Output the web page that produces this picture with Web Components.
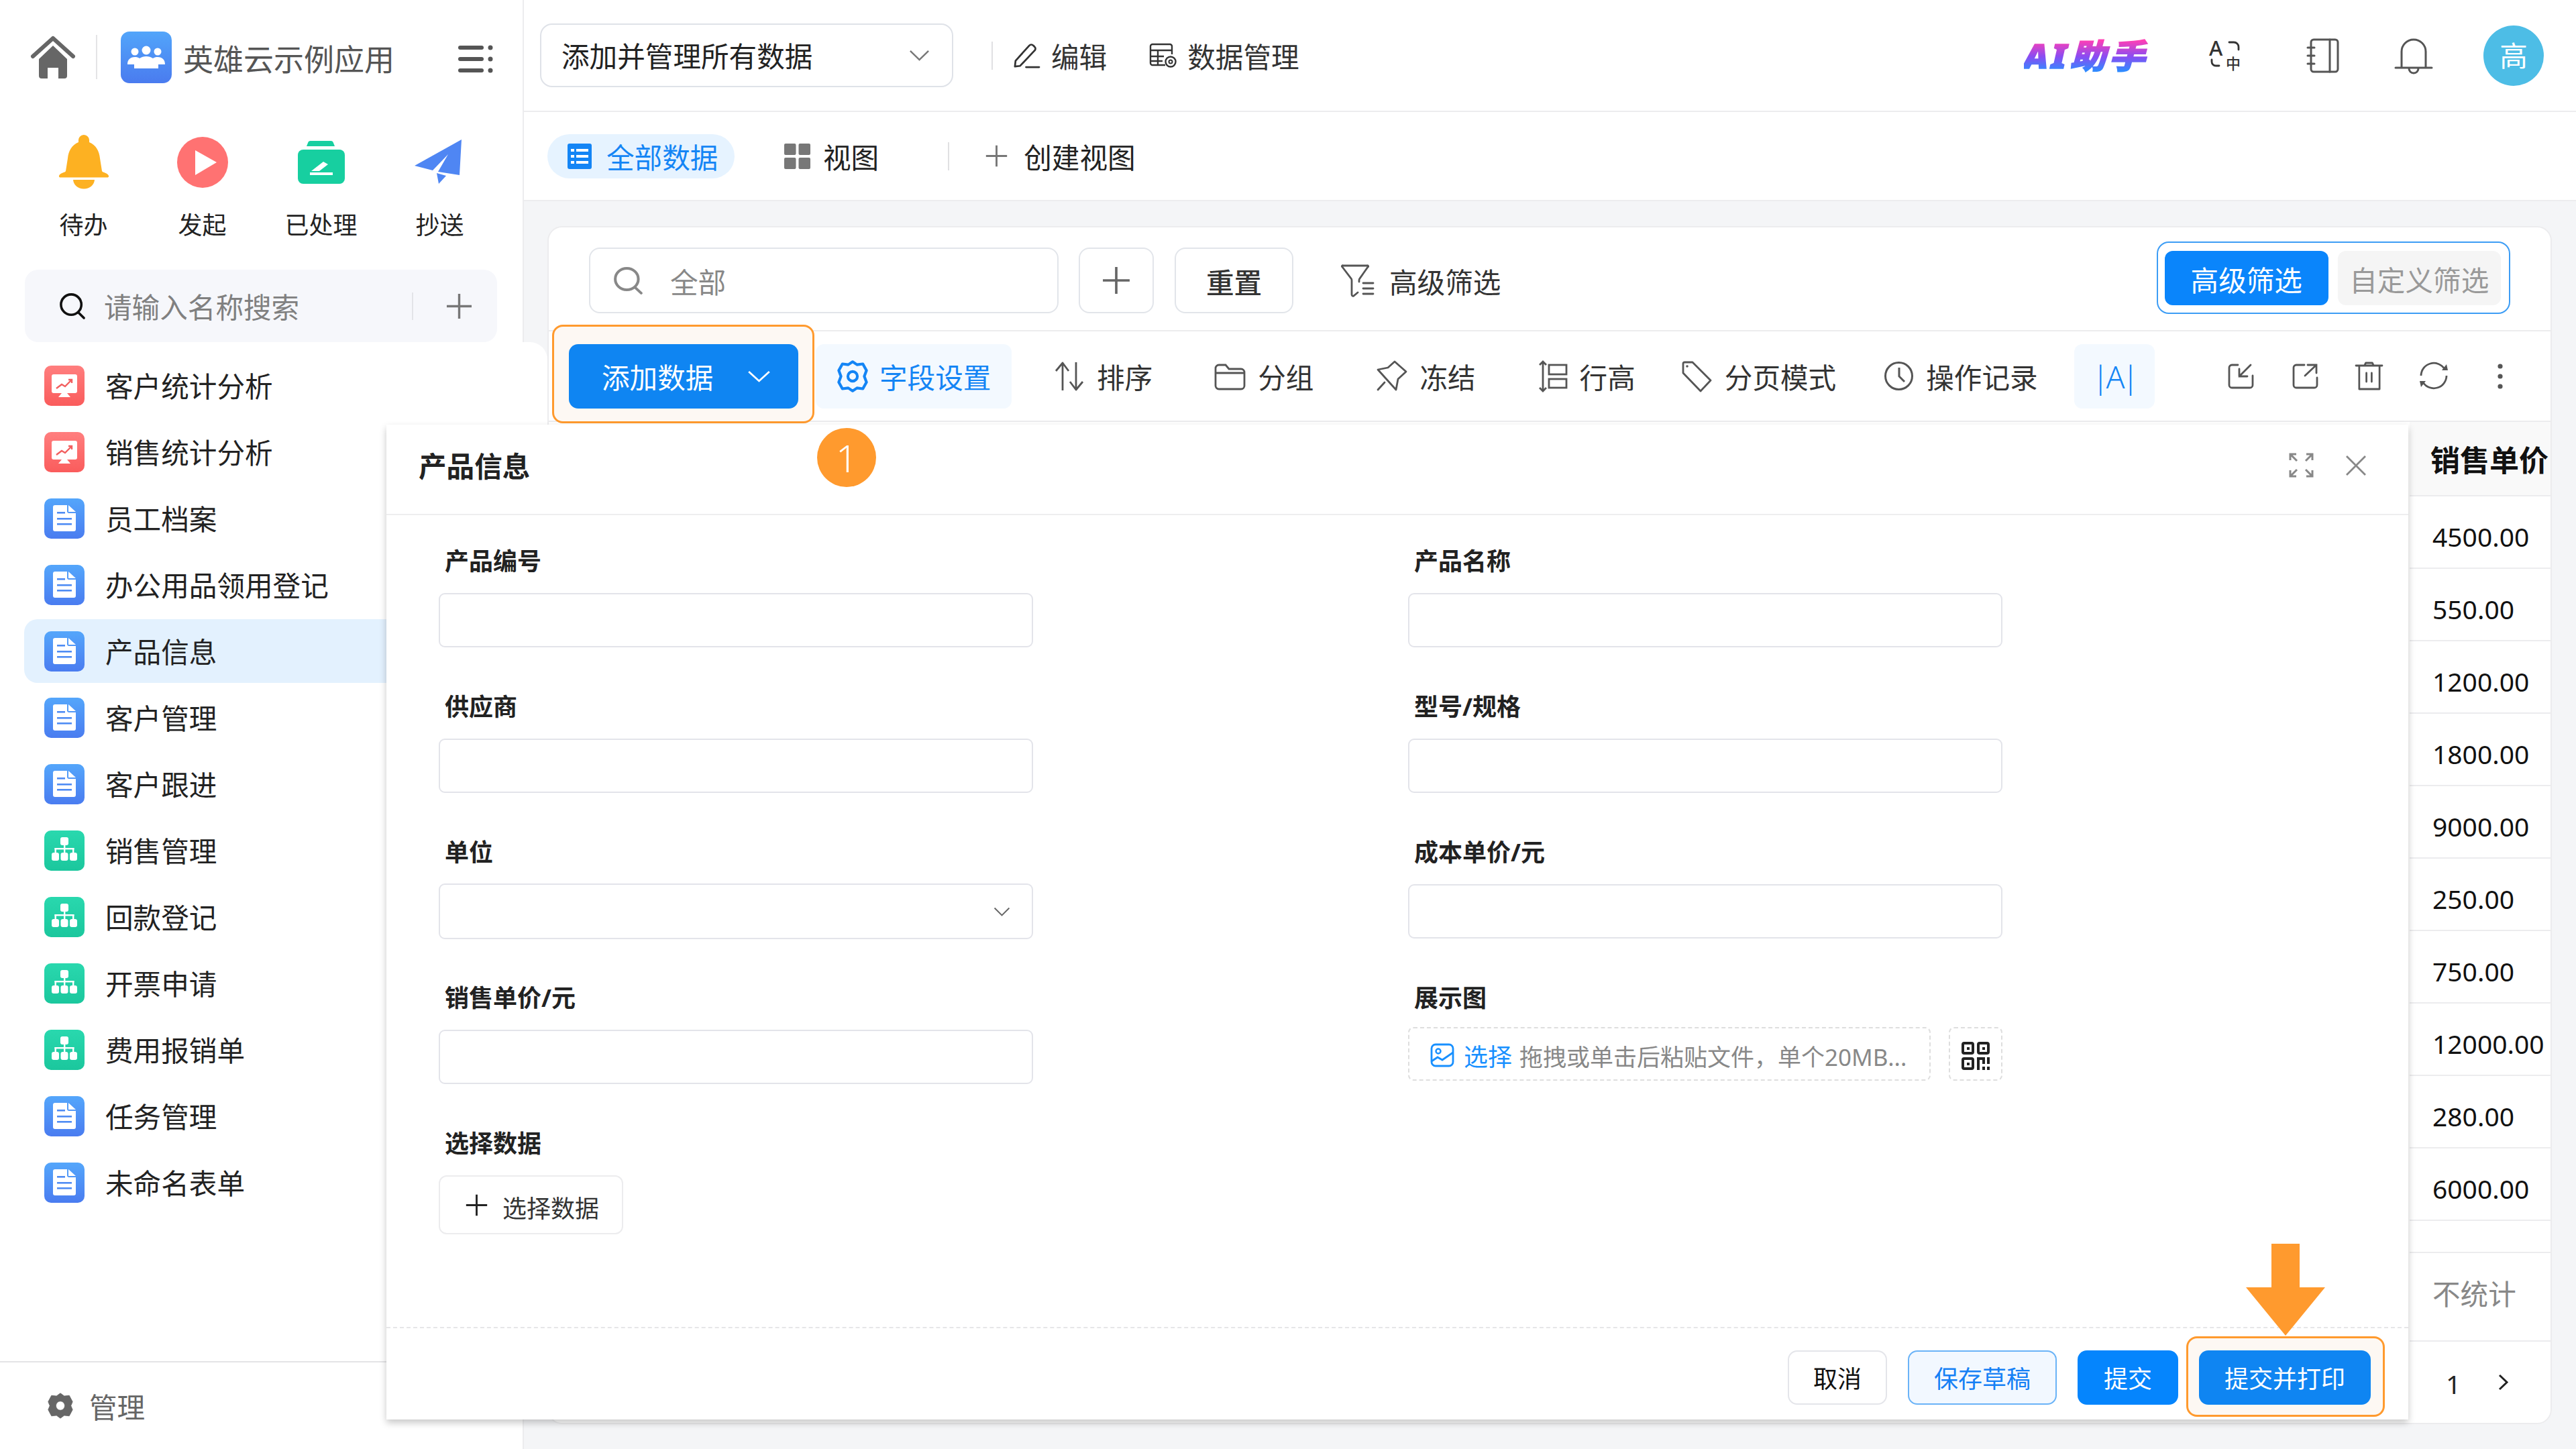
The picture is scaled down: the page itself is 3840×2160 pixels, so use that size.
<!DOCTYPE html>
<html lang="zh-CN">
<head>
<meta charset="utf-8">
<title>产品信息</title>
<style>
  html, body { margin: 0; padding: 0; background: #fff; }
  body { font-family: "Noto Sans", "Noto Sans CJK SC", sans-serif; font-size: 41.6px; color: #222; }
</style>
</head>
<body>
<app-shell>
  <app-sidebar slot="side">
    <side-item icon="chart">客户统计分析</side-item>
    <side-item icon="chart">销售统计分析</side-item>
    <side-item icon="doc">员工档案</side-item>
    <side-item icon="doc">办公用品领用登记</side-item>
    <side-item icon="doc" active>产品信息</side-item>
    <side-item icon="doc">客户管理</side-item>
    <side-item icon="doc">客户跟进</side-item>
    <side-item icon="org">销售管理</side-item>
    <side-item icon="org">回款登记</side-item>
    <side-item icon="org">开票申请</side-item>
    <side-item icon="org">费用报销单</side-item>
    <side-item icon="doc">任务管理</side-item>
    <side-item icon="doc">未命名表单</side-item>
  </app-sidebar>
  <app-topbar slot="main"></app-topbar>
  <app-viewbar slot="main"></app-viewbar>
  <data-card slot="main">
    <filter-row slot="filter"></filter-row>
    <tool-bar slot="tools"></tool-bar>
    <price-column slot="prices">
      <price-cell>4500.00</price-cell>
      <price-cell>550.00</price-cell>
      <price-cell>1200.00</price-cell>
      <price-cell>1800.00</price-cell>
      <price-cell>9000.00</price-cell>
      <price-cell>250.00</price-cell>
      <price-cell>750.00</price-cell>
      <price-cell>12000.00</price-cell>
      <price-cell>280.00</price-cell>
      <price-cell>6000.00</price-cell>
    </price-column>
  </data-card>
  <form-modal slot="over">
    <form-field label="产品编号"><text-input></text-input></form-field>
    <form-field label="产品名称"><text-input></text-input></form-field>
    <form-field label="供应商"><text-input></text-input></form-field>
    <form-field label="型号/规格"><text-input></text-input></form-field>
    <form-field label="单位"><text-input select></text-input></form-field>
    <form-field label="成本单价/元"><text-input></text-input></form-field>
    <form-field label="销售单价/元"><text-input></text-input></form-field>
    <form-field label="展示图"><upload-box></upload-box></form-field>
    <form-field label="选择数据"><pick-button></pick-button></form-field>
    <action-button slot="actions" kind="plain">取消</action-button>
    <action-button slot="actions" kind="light">保存草稿</action-button>
    <action-button slot="actions" kind="solid">提交</action-button>
    <action-button slot="actions" kind="print" callout>提交并打印</action-button>
  </form-modal>
</app-shell>

<script>
const ICONS = {
  home: ['0 0 66 66', `<path d="M3 32 33 5l30 27" fill="none" stroke="#666" stroke-width="6" stroke-linejoin="round" stroke-linecap="round"/><path d="M12 36 33 16l21 20v25a4 4 0 0 1-4 4H41V49H25v16h-9a4 4 0 0 1-4-4z" fill="#666"/>`],
  logo: ['0 0 76 77', `<defs><linearGradient id="g" x1="0" y1="0" x2="0" y2="1"><stop offset="0" stop-color="#52a5fa"/><stop offset="1" stop-color="#4a7bef"/></linearGradient></defs><rect width="76" height="77" rx="13" fill="url(#g)"/><g fill="#fff"><circle cx="21" cy="30" r="5.500"/><circle cx="38" cy="28" r="6.500"/><circle cx="55" cy="30" r="5.500"/><path d="M10 49c0-7 4-11 11-11 3 0 5 .6 7 2 3-2 6-3 10-3s7 1 10 3c2-1.400 4-2 7-2 7 0 11 4 11 11H56v6H20v-6z"/></g>`],
  menu: ['0 0 52 40', `<g fill="#555"><rect width="38" height="6" rx="3"/><rect y="17" width="38" height="6" rx="3"/><rect y="34" width="38" height="6" rx="3"/><circle cx="48" cy="3" r="3.500"/><circle cx="48" cy="20" r="3.500"/><circle cx="48" cy="37" r="3.500"/></g>`],
  bellFill: ['0 0 76 82', `<g fill="#fdb122"><path d="M38 0a8 8 0 0 1 8 9v2c10 4 15 13 16 24l3 19c.5 2 9 3 10 7 .4 1.500-.6 2.500-2 2.500H3c-1.400 0-2.400-1-2-2.500 1-4 9.500-5 10-7l3-19c1-11 6-20 16-24V9a8 8 0 0 1 8-9z"/><path d="M18 67h40c-1 9-9 15-20 15s-19-6-20-15z" transform="translate(7.600 6.700) scale(.8 .9)"/></g>`],
  play: ['0 0 76 76', `<circle cx="38" cy="38" r="38" fill="#ff7272"/><path d="M27 20 59 38 27 57z" fill="#fff"/>`],
  done: ['0 0 70 64', `<path d="M13 8l2-5a4 4 0 0 1 4-3h30a4 4 0 0 1 4 3l2 5z" fill="#17cfa0"/><rect y="13" width="70" height="51" rx="8" fill="#17cfa0"/><path d="M20 45 38 31l7 4-13 10z" fill="#fff"/><rect x="18" y="47" width="34" height="4" fill="#fff"/>`],
  plane: ['0 0 74 68', `<path d="M71 0 1 39l27 7 23-24-15 26 32 5zM34 50l14 4-11 12z" fill="#4f86f3"/>`],
  search: ['0 0 40 40', `<circle cx="18" cy="18" r="16" fill="none" stroke="currentColor" stroke-width="3.800"/><path d="M30 31l8 8" stroke="currentColor" stroke-width="3.800" stroke-linecap="round"/>`],
  plus: ['0 0 40 40', `<path d="M20 1v38M1 20h38" stroke="currentColor" stroke-width="3.500"/>`],
  chevron: ['0 0 32 18', `<path d="M2 2l14 14L30 2" fill="none" stroke="currentColor" stroke-width="2.500"/>`],
  edit: ['0 0 42 40', `<path d="M5 28 26 4a4 4 0 0 1 6 0l2 2a4 4 0 0 1 0 6L12 36l-8 1zM21 38h20" fill="none" stroke="currentColor" stroke-width="2.800" stroke-linecap="round" stroke-linejoin="round"/>`],
  dataset: ['0 0 42 38', `<path d="M24 33H5a3 3 0 0 1-3-3V5a3 3 0 0 1 3-3h26a3 3 0 0 1 3 3v12M2 11h32M2 20h20M2 27h18M13 11v22" fill="none" stroke="currentColor" stroke-width="2.400"/><circle cx="32" cy="28" r="7.500" fill="#fff" stroke="currentColor" stroke-width="2.400"/><circle cx="32" cy="28" r="2.500" fill="none" stroke="currentColor" stroke-width="2"/>`],
  translate: ['0 0 48 48', `<path d="M31 4h7a7 7 0 0 1 7 7v4M5 30v3a6 6 0 0 0 6 6h5" fill="none" stroke="currentColor" stroke-width="2.800" stroke-linecap="round"/><text x="1" y="24" font-size="31" font-weight="500" font-family="Noto Sans" fill="currentColor">A</text><text x="26" y="44" font-size="22" font-weight="500" font-family="Noto Sans CJK SC" fill="currentColor">中</text>`],
  notebook: ['0 0 49 52', `<rect x="7" y="2" width="40" height="48" rx="4" fill="none" stroke="currentColor" stroke-width="3"/><path d="M35 2v48M2 14h10M2 26h10M2 38h10" stroke="currentColor" stroke-width="3" fill="none" stroke-linecap="round"/>`],
  bell: ['0 0 56 54', `<path d="M10 45V21a18 18 0 0 1 36 0v24M1 45h54M21 46c0 4 3 7 7 7s7-3 7-7" fill="none" stroke="currentColor" stroke-width="3" stroke-linecap="round"/>`],
  list: ['0 0 36 38', `<rect width="36" height="38" rx="3" fill="#1485f5"/><g fill="#fff"><rect x="5" y="8" width="5" height="4"/><rect x="13" y="8" width="18" height="4"/><rect x="5" y="17" width="5" height="4"/><rect x="13" y="17" width="18" height="4"/><rect x="5" y="26" width="5" height="4"/><rect x="13" y="26" width="18" height="4"/></g>`],
  grid: ['0 0 39 38', `<g fill="#777"><rect width="17.500" height="17" rx="2"/><rect x="21.500" width="17.500" height="17" rx="2"/><rect y="21" width="17.500" height="17" rx="2"/><rect x="21.500" y="21" width="17.500" height="17" rx="2"/></g>`],
  funnel: ['0 0 51 51', `<path d="M3 3h36a1 1 0 0 1 1 2L28 22c-1 1-1 2-1 3v2M3 3a1 1 0 0 0-1 2l13 17c1 1 1 2 1 3v21c0 2 2 3 3 2l6-5M33 29h15M33 37h15M33 45h15" fill="none" stroke="currentColor" stroke-width="2.800" stroke-linecap="round"/>`],
  gear: ['0 0 46 46', `<path d="M23 3l6 4 8-1 5 9-3 8 3 8-5 9-8-1-6 4-6-4-8 1-5-9 3-8-3-8 5-9 8 1z" fill="none" stroke="currentColor" stroke-width="3.800" stroke-linejoin="round"/><circle cx="23" cy="23" r="6.500" fill="none" stroke="currentColor" stroke-width="3.800"/>`],
  gearFill: ['0 0 46 46', `<path fill-rule="evenodd" d="M23 1l7 5 9-1 6 11-3 7 3 7-6 11-9-1-7 5-7-5-9 1L1 30l3-7-3-7L7 5l9 1zM23 15a8 8 0 1 0 0 16 8 8 0 0 0 0-16z" fill="#666" stroke="#666" stroke-width="1" stroke-linejoin="round"/>`],
  sort: ['0 0 46 46', `<path d="M13 44V3L3 15M13 3l9 12M33 2v41l10-12M33 43l-9-12" fill="none" stroke="currentColor" stroke-width="2.800" stroke-linejoin="round"/>`],
  folder: ['0 0 47 42', `<path d="M2 9a5 5 0 0 1 5-5h10l5 6h18a5 5 0 0 1 5 5v20a5 5 0 0 1-5 5H7a5 5 0 0 1-5-5zM2 16h43" fill="none" stroke="currentColor" stroke-width="2.800"/>`],
  pin: ['0 0 46 47', `<path d="M27 2 44 17 32 28 29 44 2 14 17 11zM12 33 2 44" fill="none" stroke="currentColor" stroke-width="2.800" stroke-linejoin="round" stroke-linecap="round"/>`],
  rowheight: ['0 0 44 48', `<path d="M7 2v44M2 7l5-5 5 5M2 41l5 5 5-5" fill="none" stroke="currentColor" stroke-width="2.800"/><rect x="16" y="7" width="26" height="14" fill="none" stroke="currentColor" stroke-width="2.800"/><rect x="16" y="28" width="26" height="13" fill="none" stroke="currentColor" stroke-width="2.800"/>`],
  tag: ['0 0 47 48', `<path d="M5 3h12l27 27-15 16L3 19V5a2 2 0 0 1 2-2z" fill="none" stroke="currentColor" stroke-width="2.800" stroke-linejoin="round"/><circle cx="9" cy="9" r="1.800" fill="currentColor"/>`],
  clock: ['0 0 45 45', `<circle cx="22.500" cy="22.500" r="20" fill="none" stroke="currentColor" stroke-width="3"/><path d="M23 10v13l8 8" fill="none" stroke="currentColor" stroke-width="3"/>`],
  import: ['0 0 39 38', `<path d="M15 2H6a4 4 0 0 0-4 4v26a4 4 0 0 0 4 4h27a4 4 0 0 0 4-4V18M34 2 17 19M17 8v11h12" fill="none" stroke="currentColor" stroke-width="2.800" stroke-linecap="round"/>`],
  export: ['0 0 39 38', `<path d="M18 2H6a4 4 0 0 0-4 4v26a4 4 0 0 0 4 4h27a4 4 0 0 0 4-4V21M36 2 19 18M23 2h13v12" fill="none" stroke="currentColor" stroke-width="2.800" stroke-linecap="round"/>`],
  trash: ['0 0 42 43', `<path d="M1 6h40M14 6l2-4h10l2 4M6 6v35h31V6M17 17v13M25 17v13" fill="none" stroke="currentColor" stroke-width="2.800" stroke-linecap="round" stroke-linejoin="round"/>`],
  refresh: ['0 0 45 45', `<path d="M3 22A19 19 0 0 1 38 12M41 22A19 19 0 0 1 6 32" fill="none" stroke="currentColor" stroke-width="2.800"/><path d="M34 14h9l-2-9zM10 30H1l2 9z" fill="currentColor"/>`],
  dots: ['0 0 8 38', `<g fill="currentColor"><circle cx="4" cy="4" r="3.600"/><circle cx="4" cy="19" r="3.600"/><circle cx="4" cy="34" r="3.600"/></g>`],
  expand: ['0 0 37 37', `<path d="M2 11V2h9M2 2l10 10M26 2h9v9M35 2 25 12M2 26v9h9M2 35l10-10M35 26v9h-9M35 35 25 25" fill="none" stroke="currentColor" stroke-width="3"/>`],
  close: ['0 0 32 32', `<path d="M2 2l28 28M30 2 2 30" stroke="currentColor" stroke-width="2.800"/>`],
  picture: ['0 0 36 36', `<rect x="2" y="2" width="32" height="32" rx="6" fill="none" stroke="#1890ff" stroke-width="2.800"/><circle cx="12" cy="12" r="3.500" fill="none" stroke="#1890ff" stroke-width="2.500"/><path d="M2 27l9-6 7 4 16-11" fill="none" stroke="#1890ff" stroke-width="2.800"/>`],
  qr: ['0 0 42 42', `<g fill="none" stroke="#222" stroke-width="4"><rect x="2" y="2" width="15" height="15" rx="2"/><rect x="25" y="2" width="15" height="15" rx="2"/><rect x="2" y="25" width="15" height="15" rx="2"/></g><g fill="#222"><rect x="8" y="8" width="4" height="4"/><rect x="31" y="8" width="4" height="4"/><rect x="8" y="31" width="4" height="4"/><rect x="23" y="23" width="4" height="19"/><rect x="23" y="23" width="12" height="4"/><rect x="31" y="23" width="4" height="10"/><rect x="38" y="23" width="4" height="10"/><rect x="31" y="37" width="4" height="5"/><rect x="38" y="37" width="4" height="5"/></g>`],
  next: ['0 0 17 25', `<path d="M3 2l11 10.500L3 23" fill="none" stroke="#222" stroke-width="3"/>`],
  chart: ['0 0 60 60', `<defs><linearGradient id="g" x1="0" y1="0" x2="0" y2="1"><stop offset="0" stop-color="#ff7e7e"/><stop offset="1" stop-color="#fa5c5c"/></linearGradient></defs><rect width="60" height="60" rx="10" fill="url(#g)"/><path d="M14 13h32a3 3 0 0 1 3 3v22a3 3 0 0 1-3 3H34l5 6H21l5-6H14a3 3 0 0 1-3-3V16a3 3 0 0 1 3-3z" fill="#fff"/><path d="M18 34l8-6 5 3 9-9M36 21h5v5" fill="none" stroke="#f25f5f" stroke-width="2.400"/>`],
  doc: ['0 0 60 60', `<defs><linearGradient id="g" x1="0" y1="0" x2="0" y2="1"><stop offset="0" stop-color="#54a6fb"/><stop offset="1" stop-color="#4a7cf0"/></linearGradient></defs><rect width="60" height="60" rx="10" fill="url(#g)"/><path d="M16 10h18v9a3 3 0 0 0 3 3h10v24a3 3 0 0 1-3 3H16a3 3 0 0 1-3-3V13a3 3 0 0 1 3-3zM36 10l11 10H36z" fill="#fff"/><g fill="#4f8cf4"><rect x="19" y="20" width="12" height="2.600"/><rect x="19" y="29" width="22" height="2.600"/><rect x="19" y="37" width="22" height="2.600"/></g>`],
  org: ['0 0 60 60', `<defs><linearGradient id="g" x1="0" y1="0" x2="0" y2="1"><stop offset="0" stop-color="#29d8ae"/><stop offset="1" stop-color="#1bc79d"/></linearGradient></defs><rect width="60" height="60" rx="10" fill="url(#g)"/><g fill="#fff"><rect x="24" y="10" width="12" height="12" rx="3"/><rect x="11" y="33" width="11" height="12" rx="3"/><rect x="24.500" y="33" width="11" height="12" rx="3"/><rect x="38" y="33" width="11" height="12" rx="3"/><rect x="29" y="22" width="2.400" height="11"/><rect x="15.500" y="26" width="29" height="2.400"/><rect x="15.500" y="26" width="2.400" height="7"/><rect x="42" y="26" width="2.400" height="7"/></g>`]
}

class UiIcon extends HTMLElement {
  connectedCallback() {
    const [box, body] = ICONS[this.getAttribute('name')]
    const w = this.getAttribute('w') || 40
    const h = this.getAttribute('h') || w
    const color = this.getAttribute('color') || 'inherit'
    if (!this.shadowRoot) this.attachShadow({ mode: 'open' })
    this.shadowRoot.innerHTML = `
      <style>
        :host { display: inline-flex; flex: none; width: ${w}px; height: ${h}px; color: ${color}; }
        svg { display: block; width: 100%; height: 100%; overflow: visible; }
      </style>
      <svg viewBox="${box}" preserveAspectRatio="none">${body}</svg>
    `
  }
}
customElements.define('ui-icon', UiIcon)

class AppShell extends HTMLElement {
  constructor() {
    super()
    this.attachShadow({ mode: 'open' })
    this.shadowRoot.innerHTML = `
      <style>
        :host { display: grid; grid-template-columns: 781px 1fr; position: relative; width: 3840px; height: 2160px; overflow: hidden; background: #fff; }
        .main { display: flex; flex-direction: column; min-width: 0; height: 2160px; }
        .patch { position: absolute; left: 779px; top: 510px; width: 37px; height: 125px; background: #fff; border-top-right-radius: 26px; z-index: 2; }
        .badge { position: absolute; left: 1218px; top: 638px; width: 88px; height: 88px; border-radius: 50%; background: #ff9a2e; color: #fff; font: 300 56px/88px "Noto Sans", sans-serif; text-align: center; z-index: 6; }
        .arrow { position: absolute; left: 3348px; top: 1854px; width: 118px; height: 137px; z-index: 6; display: block; }
      </style>
      <slot name="side"></slot>
      <div class="main"><slot name="main"></slot></div>
      <div class="patch"></div>
      <slot name="over"></slot>
      <div class="badge">1</div>
      <svg class="arrow" viewBox="0 0 118 137"><path d="M38 0h42v65h38L59 137 0 65h38z" fill="#ff9a2e"/></svg>
    `
  }
}
customElements.define('app-shell', AppShell)

class AppSidebar extends HTMLElement {
  constructor() {
    super()
    this.attachShadow({ mode: 'open' })
    this.shadowRoot.innerHTML = `
      <style>
        :host { display: flex; flex-direction: column; height: 2160px; border-right: 2px solid #ececee; box-sizing: border-box; background: #fff; }
        .head { display: flex; align-items: center; height: 170px; padding-left: 46px; flex: none; }
        .rule { width: 2px; height: 66px; background: #e4e4e6; margin: 0 35px 0 31px; }
        .title { font-size: 45px; line-height: 60px; color: #555; margin: 8px 0 0 17px; white-space: nowrap; }
        .menu { margin: 6px 44px 0 auto; }
        .quick { display: grid; grid-template-columns: repeat(4, 177px); padding: 30px 0 0 36px; flex: none; }
        .search { display: flex; align-items: center; box-sizing: border-box; width: 704px; height: 108px; margin: 44px 0 0 37px; padding: 0 37px 0 52px; background: #f6f7fb; border-radius: 20px; flex: none; color: #111; }
        .search span { margin-left: 28px; color: #808080; line-height: 60px; padding-top: 3px; }
        .search i { width: 2px; height: 41px; background: #e3e4e8; margin-left: auto; margin-right: 49px; }
        .list { flex: 1; padding-top: 17px; }
        .foot { display: flex; align-items: center; height: 131px; box-sizing: border-box; flex: none; padding: 0 0 0 71px; border-top: 2px solid #e4e4e6; color: #666; }
        .foot span { margin-left: 24px; line-height: 60px; padding-top: 4px; }
      </style>
      <div class="head">
        <ui-icon name="home" w="66" h="66"></ui-icon>
        <div class="rule"></div>
        <ui-icon name="logo" w="76" h="77"></ui-icon>
        <div class="title">英雄云示例应用</div>
        <ui-icon class="menu" name="menu" w="52" h="40"></ui-icon>
      </div>
      <div class="quick">
        <quick-action icon="bellFill" w="76" h="82">待办</quick-action>
        <quick-action icon="play" w="76" h="76">发起</quick-action>
        <quick-action icon="done" w="70" h="64">已处理</quick-action>
        <quick-action icon="plane" w="74" h="68" shift="-4">抄送</quick-action>
      </div>
      <div class="search">
        <ui-icon name="search" w="38" h="38"></ui-icon>
        <span>请输入名称搜索</span>
        <i></i>
        <ui-icon name="plus" w="39" h="39" color="#777"></ui-icon>
      </div>
      <div class="list"><slot></slot></div>
      <div class="foot"><ui-icon name="gearFill" w="38" h="39"></ui-icon><span>管理</span></div>
    `
  }
}
customElements.define('app-sidebar', AppSidebar)

class QuickAction extends HTMLElement {
  constructor() {
    super()
    this.attachShadow({ mode: 'open' })
    this.shadowRoot.innerHTML = `
      <style>
        :host { display: flex; flex-direction: column; align-items: center; font-size: 36px; color: #222; }
        .pic { display: flex; align-items: center; justify-content: center; height: 84px; margin-left: ${this.getAttribute('shift') || 0}px; }
        .txt { line-height: 44px; margin-top: 30px; }
      </style>
      <div class="pic"><ui-icon name="${this.getAttribute('icon')}" w="${this.getAttribute('w')}" h="${this.getAttribute('h')}"></ui-icon></div>
      <div class="txt"><slot></slot></div>
    `
  }
}
customElements.define('quick-action', QuickAction)

class SideItem extends HTMLElement {
  constructor() {
    super()
    this.attachShadow({ mode: 'open' })
    this.shadowRoot.innerHTML = `
      <style>
        :host { display: flex; align-items: center; height: 95px; margin: 0 0 4px 36px; padding-left: 30px; color: #222; border-radius: 20px 0 0 20px; }
        :host([active]) { background: #e3f1fe; }
        span { margin-left: 31px; line-height: 60px; padding-top: 3px; white-space: nowrap; }
      </style>
      <ui-icon name="${this.getAttribute('icon')}" w="60" h="60"></ui-icon>
      <span><slot></slot></span>
    `
  }
}
customElements.define('side-item', SideItem)

class AppTopbar extends HTMLElement {
  constructor() {
    super()
    this.attachShadow({ mode: 'open' })
    this.shadowRoot.innerHTML = `
      <style>
        :host { display: flex; align-items: center; box-sizing: border-box; height: 167px; flex: none; padding: 0 48px 0 24px; border-bottom: 2px solid #ececee; color: #333; }
        .pick { display: flex; align-items: center; box-sizing: border-box; width: 616px; height: 95px; padding: 0 33px 0 30px; border: 2px solid #dfe2e8; border-radius: 18px; color: #222; }
        .pick span { flex: 1; line-height: 60px; padding-top: 3px; white-space: nowrap; }
        .rule { width: 2px; height: 42px; background: #e0e0e2; margin: 0 29px 0 57px; }
        .txt { line-height: 60px; padding-top: 5px; white-space: nowrap; }
        .ai { flex: none; width: 182px; margin-left: auto; font: italic 900 50px/60px "Noto Sans", "Noto Sans CJK SC", sans-serif; letter-spacing: 4px; transform: scaleX(1.080); transform-origin: left center; background: linear-gradient(to bottom, #ff3fb5 12%, #8a4cf2 52%, #2f8bff 88%); -webkit-background-clip: text; background-clip: text; color: transparent; -webkit-text-stroke: 1.500px transparent; white-space: nowrap; }
        .avatar { width: 90px; height: 90px; border-radius: 50%; background: #4dbde6; color: #fff; text-align: center; line-height: 90px; margin-left: 76px; }
      </style>
      <div class="pick"><span>添加并管理所有数据</span><ui-icon name="chevron" w="31" h="17" color="#777"></ui-icon></div>
      <div class="rule"></div>
      <ui-icon name="edit" w="41" h="38"></ui-icon>
      <div class="txt" style="margin-left:17px">编辑</div>
      <ui-icon name="dataset" w="42" h="38" style="margin-left:63px"></ui-icon>
      <div class="txt" style="margin-left:15px">数据管理</div>
      <div class="ai">AI助手</div>
      <ui-icon name="translate" w="48" h="48" style="margin-left:93px" color="#333"></ui-icon>
      <ui-icon name="notebook" w="49" h="52" style="margin-left:98px" color="#555"></ui-icon>
      <ui-icon name="bell" w="56" h="54" style="margin-left:83px" color="#555"></ui-icon>
      <div class="avatar">高</div>
    `
  }
}
customElements.define('app-topbar', AppTopbar)

class AppViewbar extends HTMLElement {
  constructor() {
    super()
    this.attachShadow({ mode: 'open' })
    this.shadowRoot.innerHTML = `
      <style>
        :host { display: flex; align-items: center; box-sizing: border-box; height: 133px; flex: none; padding-left: 35px; border-bottom: 2px solid #ececee; color: #222; }
        .pill { display: flex; align-items: center; box-sizing: border-box; width: 279px; height: 66px; padding-left: 30px; border-radius: 33px; background: #e6f3ff; color: #1485f5; }
        .txt { line-height: 60px; padding-top: 4px; white-space: nowrap; }
        .rule { width: 2px; height: 42px; background: #e0e0e2; margin: 0 54px 0 103px; }
      </style>
      <div class="pill"><ui-icon name="list" w="36" h="38"></ui-icon><span class="txt" style="margin-left:22px">全部数据</span></div>
      <ui-icon name="grid" w="39" h="38" style="margin-left:74px"></ui-icon>
      <span class="txt" style="margin-left:19px">视图</span>
      <div class="rule"></div>
      <ui-icon name="plus" w="33" h="33" color="#777"></ui-icon>
      <span class="txt" style="margin-left:24px">创建视图</span>
    `
  }
}
customElements.define('app-viewbar', AppViewbar)

class DataCard extends HTMLElement {
  constructor() {
    super()
    this.attachShadow({ mode: 'open' })
    this.shadowRoot.innerHTML = `
      <style>
        :host { display: block; flex: 1; background: #f4f5f7; padding: 37px 36px 37px 35px; min-height: 0; box-sizing: border-box; }
        .card { display: flex; flex-direction: column; box-sizing: border-box; height: 100%; background: #fff; border: 2px solid #ececee; border-radius: 22px; overflow: hidden; }
        .table { flex: 1; display: flex; min-height: 0; }
        .rest { flex: 1; border-top: 2px solid #ececee; }
      </style>
      <div class="card">
        <slot name="filter"></slot>
        <slot name="tools"></slot>
        <div class="table"><div class="rest"></div><slot name="prices"></slot></div>
      </div>
    `
  }
}
customElements.define('data-card', DataCard)

class FilterRow extends HTMLElement {
  constructor() {
    super()
    this.attachShadow({ mode: 'open' })
    this.shadowRoot.innerHTML = `
      <style>
        :host { display: flex; align-items: flex-start; box-sizing: border-box; height: 155px; flex: none; padding: 30px 0 0 60px; border-bottom: 2px solid #ececee; color: #333; }
        .box { display: flex; align-items: center; justify-content: center; box-sizing: border-box; height: 98px; border: 2px solid #e2e5ea; border-radius: 16px; line-height: 60px; }
        .find { width: 700px; justify-content: flex-start; padding-left: 35px; color: #888; }
        .find span { margin-left: 41px; padding-top: 6px; }
        .adv { display: flex; align-items: center; height: 98px; margin-left: 71px; line-height: 60px; }
        .adv span { margin-left: 21px; padding-top: 6px; }
        .switch { display: flex; gap: 14px; box-sizing: border-box; width: 527px; height: 108px; margin: -9px 60px 0 auto; padding: 12px 12px 0 10px; border: 2.500px solid #3d9df5; border-radius: 18px; }
        .switch div { width: 244px; height: 81px; border-radius: 12px; text-align: center; line-height: 88px; font-size: 41.6px; }
        .on { background: #0a85fb; color: #fff; }
        .off { background: #f5f5f5; color: #999; }
      </style>
      <div class="box find"><ui-icon name="search" w="43" h="40" color="#888"></ui-icon><span>全部</span></div>
      <div class="box" style="width:112px;margin-left:30px"><ui-icon name="plus" w="42" h="42" color="#666"></ui-icon></div>
      <div class="box" style="width:177px;margin-left:31px;font-weight:500;color:#333;padding-top:6px">重置</div>
      <div class="adv"><ui-icon name="funnel" w="51" h="51" color="#555"></ui-icon><span>高级筛选</span></div>
      <div class="switch"><div class="on">高级筛选</div><div class="off">自定义筛选</div></div>
    `
  }
}
customElements.define('filter-row', FilterRow)

class ToolItem extends HTMLElement {
  constructor() {
    super()
    this.attachShadow({ mode: 'open' })
    this.shadowRoot.innerHTML = `
      <style>
        :host { display: inline-flex; align-items: center; flex: none; }
        span { margin-left: 18px; line-height: 60px; padding-top: 4px; white-space: nowrap; color: #333; }
      </style>
      <ui-icon name="${this.getAttribute('icon')}" w="${this.getAttribute('w') || 46}" h="${this.getAttribute('h') || 46}" color="#555"></ui-icon>
      <span><slot></slot></span>
    `
  }
}
customElements.define('tool-item', ToolItem)

class ToolBar extends HTMLElement {
  constructor() {
    super()
    this.attachShadow({ mode: 'open' })
    this.shadowRoot.innerHTML = `
      <style>
        :host { display: flex; align-items: center; box-sizing: border-box; height: 133px; flex: none; padding-left: 30px; }
        .add { position: relative; isolation: isolate; display: flex; align-items: center; box-sizing: border-box; width: 342px; height: 96px; padding-left: 49px; background: #0f85f2; border-radius: 14px; color: #fff; }
        .add::before { content: ""; position: absolute; left: -25px; top: -29px; right: -24px; bottom: -22px; background: #fdf8f3; border: 3px solid #ff9a2e; border-radius: 16px; z-index: -2; }
        .add::after { content: ""; position: absolute; inset: 0; background: #0f85f2; border-radius: 14px; z-index: -1; }
        .add span { line-height: 60px; padding-top: 4px; }
        .field { display: flex; align-items: center; box-sizing: border-box; width: 292px; height: 96px; margin-left: 26px; padding-left: 30px; background: #f3f9ff; border-radius: 12px; color: #1485f5; }
        .field span { margin-left: 15px; line-height: 60px; padding-top: 4px; white-space: nowrap; }
        .wrap { display: flex; align-items: center; justify-content: center; width: 120px; height: 96px; margin-left: 54px; background: #f3f9ff; border-radius: 12px; color: #1485f5; font: 300 46px/60px "Noto Sans", sans-serif; letter-spacing: -4px; }
      </style>
      <div class="add"><span>添加数据</span><ui-icon name="chevron" w="35" h="18" style="margin-left:51px"></ui-icon></div>
      <div class="field"><ui-icon name="gear" w="50" h="50"></ui-icon><span>字段设置</span></div>
      <tool-item icon="sort" style="margin-left:63px">排序</tool-item>
      <tool-item icon="folder" w="47" h="42" style="margin-left:92px">分组</tool-item>
      <tool-item icon="pin" h="47" style="margin-left:94px">冻结</tool-item>
      <tool-item icon="rowheight" w="44" h="48" style="margin-left:93px">行高</tool-item>
      <tool-item icon="tag" w="47" h="48" style="margin-left:68px">分页模式</tool-item>
      <tool-item icon="clock" w="45" h="45" style="margin-left:71px">操作记录</tool-item>
      <div class="wrap">|A|</div>
      <ui-icon name="import" w="39" h="38" color="#555" style="margin-left:109px"></ui-icon>
      <ui-icon name="export" w="39" h="38" color="#555" style="margin-left:57px"></ui-icon>
      <ui-icon name="trash" w="41" h="43" color="#555" style="margin-left:55px"></ui-icon>
      <ui-icon name="refresh" w="45" h="45" color="#555" style="margin-left:54px"></ui-icon>
      <ui-icon name="dots" w="8" h="38" color="#555" style="margin-left:72px"></ui-icon>
    `
  }
}
customElements.define('tool-bar', ToolBar)

class PriceColumn extends HTMLElement {
  constructor() {
    super()
    this.attachShadow({ mode: 'open' })
    this.shadowRoot.innerHTML = `
      <style>
        :host { display: flex; flex-direction: column; flex: none; width: 210px; border-top: 2px solid #ececee; overflow: hidden; }
        .th { display: flex; align-items: center; height: 109px; padding-left: 31px; background: #f9f9f9; border-bottom: 2px solid #ececee; font-size: 44px; font-weight: 700; color: #111; white-space: nowrap; flex: none; }
        .gap { height: 46px; border-bottom: 2px solid #ececee; flex: none; }
        .sum { display: flex; align-items: center; height: 118px; padding: 0 0 12px 34px; border-bottom: 2px solid #ececee; color: #888; flex: none; }
        .page { display: flex; align-items: center; flex: 1; padding-left: 54px; color: #222; font-size: 39px; }
        .page span { padding-top: 4px; }
        .page ui-icon { margin-left: 55px; }
      </style>
      <div class="th">销售单价</div>
      <slot></slot>
      <div class="gap"></div>
      <div class="sum">不统计</div>
      <div class="page"><span>1</span><ui-icon name="next" w="17" h="25"></ui-icon></div>
    `
  }
}
customElements.define('price-column', PriceColumn)

class PriceCell extends HTMLElement {
  constructor() {
    super()
    this.attachShadow({ mode: 'open' })
    this.shadowRoot.innerHTML = `
      <style>
        :host { display: flex; align-items: center; box-sizing: border-box; height: 108px; padding: 12px 0 0 34px; border-bottom: 2px solid #ececee; font-size: 39px; color: #111; white-space: nowrap; flex: none; }
      </style>
      <slot></slot>
    `
  }
}
customElements.define('price-cell', PriceCell)

class FormModal extends HTMLElement {
  constructor() {
    super()
    this.attachShadow({ mode: 'open' })
    this.shadowRoot.innerHTML = `
      <style>
        :host { position: absolute; left: 576px; top: 633px; width: 3014px; height: 1483px; display: flex; flex-direction: column; background: #fff; box-shadow: 0 5px 10px rgba(0, 0, 0, .22); z-index: 5; }
        .head { display: flex; align-items: center; box-sizing: border-box; height: 135px; flex: none; padding: 0 62px 12px 48px; border-bottom: 2px solid #eeeeef; color: #888; }
        h2 { margin: 0; font-size: 41.6px; line-height: 60px; padding-top: 3px; font-weight: 700; color: #222; flex: 1; }
        .body { flex: 1; display: grid; grid-template-columns: 886px 886px; grid-auto-rows: 152px; column-gap: 559px; row-gap: 65px; padding: 45px 0 0 78px; align-content: start; }
        .foot { display: flex; justify-content: flex-end; gap: 31px; box-sizing: border-box; height: 138px; flex: none; padding: 33px 56px 0 0; border-top: 2px dashed #e6e6e8; }
      </style>
      <div class="head">
        <h2>产品信息</h2>
        <ui-icon name="expand" w="37" h="37" style="margin-right:47px"></ui-icon>
        <ui-icon name="close" w="32" h="32"></ui-icon>
      </div>
      <div class="body"><slot></slot></div>
      <div class="foot"><slot name="actions"></slot></div>
    `
  }
}
customElements.define('form-modal', FormModal)

class FormField extends HTMLElement {
  constructor() {
    super()
    this.attachShadow({ mode: 'open' })
    this.shadowRoot.innerHTML = `
      <style>
        :host { display: block; }
        .label { height: 44px; line-height: 48px; padding-left: 9px; margin-bottom: 27px; font-size: 36px; font-weight: 700; color: #222; }
      </style>
      <div class="label">${this.getAttribute('label')}</div>
      <slot></slot>
    `
  }
}
customElements.define('form-field', FormField)

class TextInput extends HTMLElement {
  constructor() {
    super()
    this.attachShadow({ mode: 'open' })
    const arrow = this.hasAttribute('select') ? '<ui-icon name="chevron" w="25" h="14" color="#666"></ui-icon>' : ''
    this.shadowRoot.innerHTML = `
      <style>
        :host { display: flex; align-items: center; justify-content: flex-end; box-sizing: border-box; height: 81px; padding-right: 32px; border: 2px solid #e3e4ea; border-radius: 9px; background: #fff; }
        :host([select]) { height: 83px; margin-top: -1px; }
      </style>
      ${arrow}
    `
  }
}
customElements.define('text-input', TextInput)

class UploadBox extends HTMLElement {
  constructor() {
    super()
    this.attachShadow({ mode: 'open' })
    this.shadowRoot.innerHTML = `
      <style>
        :host { display: flex; gap: 27px; height: 80px; margin-top: -4px; font-size: 36px; }
        .drop, .code { display: flex; align-items: center; box-sizing: border-box; height: 80px; border: 2px dashed #dedede; border-radius: 8px; }
        .drop { width: 779px; padding: 4px 0 0 31px; white-space: nowrap; overflow: hidden; }
        .code { width: 80px; justify-content: center; padding-top: 5px; }
        b { font-weight: 400; color: #1890ff; margin: 0 11px 0 14px; }
        span { color: #888; font-size: 35px; }
      </style>
      <div class="drop"><ui-icon name="picture" w="36" h="36"></ui-icon><b>选择</b><span>拖拽或单击后粘贴文件，单个20MB...</span></div>
      <div class="code"><ui-icon name="qr" w="42" h="42"></ui-icon></div>
    `
  }
}
customElements.define('upload-box', UploadBox)

class PickButton extends HTMLElement {
  constructor() {
    super()
    this.attachShadow({ mode: 'open' })
    this.shadowRoot.innerHTML = `
      <style>
        :host { display: flex; align-items: center; box-sizing: border-box; width: 275px; height: 88px; margin-top: 2px; padding-left: 38px; border: 2px solid #ececee; border-radius: 12px; font-size: 36px; color: #333; }
        span { margin-left: 22px; line-height: 50px; padding-top: 12px; }
      </style>
      <ui-icon name="plus" w="33" h="33" color="#222"></ui-icon><span>选择数据</span>
    `
  }
}
customElements.define('pick-button', PickButton)

class ActionButton extends HTMLElement {
  constructor() {
    super()
    this.attachShadow({ mode: 'open' })
    this.shadowRoot.innerHTML = `
      <style>
        :host { position: relative; isolation: isolate; display: flex; align-items: center; justify-content: center; box-sizing: border-box; height: 81px; font-size: 36px; border-radius: 14px; }
        :host([kind=plain]) { width: 148px; border: 2px solid #e4e5ea; color: #111; }
        :host([kind=light]) { width: 222px; border: 2px solid #6ab3f7; background: #f2f8ff; color: #1680f5; }
        :host([kind=solid]) { width: 150px; background: #0585fd; color: #fff; }
        :host([kind=print]) { width: 256px; color: #fff; }
        .fill { position: absolute; inset: 0; background: #0f85f2; border-radius: 14px; z-index: -1; }
        .mark { position: absolute; left: -19px; top: -21px; right: -21px; bottom: -18px; background: #fdf8f3; border: 3px solid #ff9a2e; border-radius: 16px; z-index: -2; }
      </style>
      ${this.hasAttribute('callout') ? '<div class="mark"></div><div class="fill"></div>' : ''}
      <slot></slot>
    `
  }
}
customElements.define('action-button', ActionButton)
</script>
</body>
</html>
